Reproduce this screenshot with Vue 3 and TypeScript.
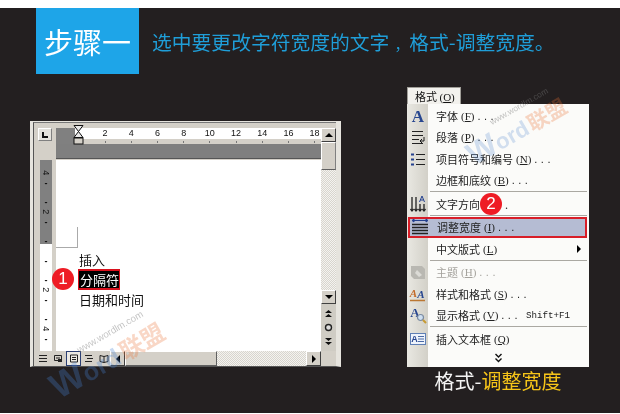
<script setup lang="ts">
interface MenuRow {
  kind: 'item' | 'sep'
  label?: string
  key?: string
  dots?: boolean
  icon?: string
  active?: boolean
  muted?: boolean
  arrow?: boolean
  shortcut?: string
  badge?: string
}

const rows: MenuRow[] = [
  { kind: 'item', label: '字体', key: 'F', dots: true, icon: 'font' },
  { kind: 'item', label: '段落', key: 'P', dots: true, icon: 'para' },
  { kind: 'item', label: '项目符号和编号', key: 'N', dots: true, icon: 'list' },
  { kind: 'item', label: '边框和底纹', key: 'B', dots: true },
  { kind: 'sep' },
  { kind: 'item', label: '文字方向', icon: 'dir', badge: '2' },
  { kind: 'sep' },
  { kind: 'item', label: '调整宽度', key: 'I', dots: true, icon: 'fit', active: true },
  { kind: 'item', label: '中文版式', key: 'L', arrow: true },
  { kind: 'sep' },
  { kind: 'item', label: '主题', key: 'H', dots: true, icon: 'theme', muted: true },
  { kind: 'item', label: '样式和格式', key: 'S', dots: true, icon: 'style' },
  { kind: 'item', label: '显示格式', key: 'V', dots: true, icon: 'reveal', shortcut: 'Shift+F1' },
  { kind: 'sep' },
  { kind: 'item', label: '插入文本框', key: 'Q', icon: 'box' }
]

const rulerNumbers: number[] = [2, 4, 6, 8, 10, 12, 14, 16, 18]
const sideRuler: string[] = ['4', '-', '', '-', '2', '-', '', '-', '', '-', '', '-', '2', '-', '', '-', '4', '-']
</script>

<template>
  <div class="page">
    <div class="dark">
      <header class="head">
        <div class="step">步骤一</div>
        <h1 class="title">选中要更改字符宽度的文字<span class="comma">，</span>格式-调整宽度。</h1>
      </header>

      <main class="main">
        <section class="win">
          <div class="grid">
            <div class="corner"><span class="corner-btn"><i></i></span></div>

            <div class="ruler">
              <div class="ruler-nums">
                <span v-for="n in rulerNumbers" :key="n">{{ n }}</span>
              </div>
              <div class="ruler-ticks">
                <span v-for="n in rulerNumbers" :key="n"><i></i></span>
              </div>
              <div class="ruler-band"></div>
              <svg class="hourglass" width="11" height="20" viewBox="0 0 11 20">
                <path d="M1 .5h9L5.5 6.5zM1 12.5L5.5 6.5 10 12.5z" fill="#e8e8e8" stroke="#111" />
                <rect x="1" y="13" width="9" height="6" fill="#d4d0c8" stroke="#111" />
              </svg>
            </div>

            <div class="vscroll">
              <button class="sbtn"><i class="tri up"></i></button>
              <div class="vthumb"></div>
              <div class="track"></div>
              <button class="sbtn"><i class="tri down"></i></button>
              <div class="browse">
                <svg width="11" height="9" viewBox="0 0 11 9"><path d="M2 4L5.500 1 9 4zM2 8L5.500 5 9 8z" fill="#111" /></svg>
                <svg width="11" height="9" viewBox="0 0 11 9"><circle cx="5.500" cy="4.500" r="3" fill="#ddd" stroke="#222" stroke-width="1.400" /></svg>
                <svg width="11" height="9" viewBox="0 0 11 9"><path d="M2 1h7L5.500 4zM2 5h7L5.500 8z" fill="#111" /></svg>
              </div>
            </div>

            <div class="side">
              <span v-for="(s, i) in sideRuler" :key="i" class="side-slot" :class="{ num: s !== '-' }">{{ s }}</span>
            </div>

            <div class="doc">
              <div class="margin-mark"></div>
              <p class="line">插入</p>
              <p class="line sel"><span>分隔符</span><b class="badge one">1</b></p>
              <p class="line">日期和时间</p>
            </div>

            <div class="hscroll">
              <div class="views">
                <svg width="10" height="9" viewBox="0 0 10 9"><path d="M1 1.500h8M1 4.500h8M1 7.500h8" stroke="#222" /></svg>
                <svg width="10" height="9" viewBox="0 0 10 9"><path d="M1.500 1.500h7v5h-7zM3 4h4" fill="none" stroke="#222" /><rect x="5" y="5" width="4" height="3" fill="#222" /></svg>
                <span class="view-on"><svg width="10" height="9" viewBox="0 0 10 9"><path d="M1.500 1h7v7h-7zM3 3.500h4M3 5.500h4" fill="none" stroke="#222" /></svg></span>
                <svg width="10" height="9" viewBox="0 0 10 9"><path d="M1 1.500h7M3 4.500h6M1 7.500h7" stroke="#222" /></svg>
                <svg width="10" height="9" viewBox="0 0 10 9"><path d="M1 1.500l4 1 4-1v6l-4 1-4-1zM5 2.500v6" fill="none" stroke="#222" /></svg>
              </div>
              <button class="sbtn small"><i class="tri left"></i></button>
              <div class="hthumb"></div>
              <div class="track"></div>
              <button class="sbtn small"><i class="tri right"></i></button>
            </div>
            <div class="grip"></div>
          </div>
        </section>

        <section class="format">
          <div class="tab">格式 <span class="key">(<u>O</u>)</span></div>
          <ul class="menu">
            <template v-for="(r, i) in rows" :key="i">
              <li v-if="r.kind === 'sep'" class="sep"></li>
              <li v-else class="row" :class="{ active: r.active, muted: r.muted }">
                <span class="ico">
                  <svg v-if="r.icon" width="18" height="18" viewBox="0 0 18 18">
                    <text v-if="r.icon === 'font'" x="9" y="15" text-anchor="middle" class="ico-a">A</text>
                    <g v-else-if="r.icon === 'para'" fill="none" stroke="#222">
                      <path d="M3 3.500h11M3 7.500h11M3 11.500h7M3 15.500h11" />
                      <path d="M15 9v4h-4m2-2l-2 2 2 2" stroke="#1a1a1a" />
                    </g>
                    <g v-else-if="r.icon === 'list'" stroke="#222">
                      <path d="M7 4.500h9M7 9.500h9M7 14.500h9" />
                      <path d="M2 3.500h3v2H2zM2 8.500h3v2H2zM2 13.500h3v2H2z" fill="#24418f" stroke="none" />
                    </g>
                    <g v-else-if="r.icon === 'dir'" fill="none" stroke="#222" stroke-width="1.300">
                      <path d="M3 2v14M7 2v14M11 9v7M15 9v7" />
                      <path d="M1.500 14l1.500 2 1.500-2M5.500 14L7 16l1.500-2M9.500 14l1.500 2 1.500-2M13.500 14l1.500 2 1.500-2" />
                      <path d="M10.500 7L13 1l2.500 6M11.500 5h3" stroke="#24418f" stroke-width="1" />
                    </g>
                    <g v-else-if="r.icon === 'fit'" stroke="#222">
                      <path d="M1 2.500l2-1.500v3zM17 2.500l-2-1.500v3zM3 2.500h12" stroke="#24418f" fill="#24418f" />
                      <path d="M1 6.500h16M1 9.500h16M1 12.500h16M1 15.500h16" stroke-width="1.300" />
                    </g>
                    <g v-else-if="r.icon === 'theme'">
                      <path d="M2 3h11l3 3v10H5l-3-3z" fill="#b9b8b2" />
                      <path d="M8 7l5 5-3 2-4-4z" fill="#dcdbd6" />
                    </g>
                    <g v-else-if="r.icon === 'style'">
                      <text x="4.500" y="12" text-anchor="middle" class="ico-s">A</text>
                      <text x="12" y="13" text-anchor="middle" class="ico-s second">A</text>
                      <path d="M1 15.500h15" stroke="#b73" stroke-width="1.500" />
                    </g>
                    <g v-else-if="r.icon === 'reveal'">
                      <text x="6" y="11" text-anchor="middle" class="ico-r">A</text>
                      <circle cx="11.500" cy="11.500" r="3" fill="#cfe0f2" stroke="#7a8aa0" stroke-width="1.200" />
                      <path d="M14 14l3 3" stroke="#c79a33" stroke-width="2" />
                    </g>
                    <g v-else-if="r.icon === 'box'">
                      <rect x="1.500" y="3.500" width="15" height="11" fill="#eef3fb" stroke="#5f7fb5" />
                      <text x="5.500" y="12" text-anchor="middle" class="ico-b">A</text>
                      <path d="M9 6.500h6M9 9h6M9 11.500h6" stroke="#4a6aa5" />
                    </g>
                  </svg>
                </span>
                <span class="label">{{ r.label }}</span>
                <span v-if="r.key" class="key">(<u>{{ r.key }}</u>)</span>
                <span v-if="r.dots" class="dots">...</span>
                <b v-if="r.badge" class="badge two">{{ r.badge }}</b>
                <span v-if="r.badge" class="tail">.</span>
                <span v-if="r.shortcut" class="shortcut">{{ r.shortcut }}</span>
                <i v-if="r.arrow" class="tri right sub"></i>
              </li>
            </template>
            <li class="more">
              <svg width="9" height="10" viewBox="0 0 9 10"><path d="M1.500 1L4.500 4l3-3M1.500 5.500l3 3 3-3" fill="none" stroke="#111" stroke-width="1.400" /></svg>
            </li>
          </ul>
          <p class="caption">格式-<em>调整宽度</em></p>
        </section>
      </main>

      <div class="mark mark-a" aria-hidden="true">
        <span class="www">www.wordlm.com</span>
        <span class="w">W</span><span class="ord">ord</span><span class="lm">联盟</span>
      </div>
      <div class="mark mark-b" aria-hidden="true">
        <span class="www">www.wordlm.com</span>
        <span class="w">W</span><span class="ord">ord</span><span class="lm">联盟</span>
      </div>
    </div>
  </div>
</template>

<style>
html,
body {
  margin: 0;
  background: #fff;
}
</style>

<style scoped>
* {
  box-sizing: border-box;
}
.page {
  width: 620px;
  height: 414px;
  overflow: hidden;
  background: #fff;
  padding-top: 9px;
  font-family: "Noto Sans CJK SC", "Liberation Sans", sans-serif;
}
.dark {
  position: relative;
  height: 405px;
  background: #231f20;
  filter: blur(0.3px);
}
.head {
  display: flex;
  align-items: center;
  padding-left: 36px;
  margin-top: -1px;
  height: 66px;
}
.step {
  width: 103px;
  height: 66px;
  display: flex;
  align-items: center;
  justify-content: center;
  background: #1ea5e8;
  color: #fff;
  font-size: 29px;
  line-height: 1;
}
.title {
  margin: 1px 0 0 13px;
  font-size: 19.800px;
  font-weight: 400;
  line-height: 1;
  color: #1f9ed8;
  white-space: nowrap;
}
.comma {
  padding-left: 5px;
  font-size: 14.800px;
}
.main {
  display: flex;
  align-items: flex-start;
  padding-left: 30px;
  margin-top: 13px;
}

/* Word window */
.win {
  width: 311px;
  height: 246px;
  margin-top: 34px;
  background: #d4d0c8;
  border: 1px solid #e6e4de;
  border-width: 1px 5px 1px 3px;
  border-bottom-color: #555;
}
.grid {
  display: grid;
  grid-template-columns: 22px 265px 15px;
  grid-template-rows: 32px 191px 16px;
  padding-top: 5px;
  border-left: 1px solid #555;
  border-top: 1px solid #777;
  height: 244px;
}
.corner {
  padding: 0 0 0 4px;
}
.corner-btn {
  display: flex;
  width: 14px;
  height: 13px;
  align-items: center;
  justify-content: center;
  background: #e4e2dc;
  border: 1px solid;
  border-color: #fff #808080 #808080 #fff;
}
.corner-btn i {
  display: block;
  width: 6px;
  height: 6px;
  border-left: 2px solid #111;
  border-bottom: 2px solid #111;
}
.ruler {
  position: relative;
  background: linear-gradient(#808080, #808080) 0 0 / 19px 16px no-repeat, #d4d0c8;
}
.ruler-nums {
  display: flex;
  height: 11px;
  padding-left: 36px;
  background: linear-gradient(90deg, transparent 19px, #fff 19px);
  font: 9px/11px "Liberation Sans", sans-serif;
  color: #111;
}
.ruler-nums span {
  flex: 0 0 26.200px;
  text-align: center;
}
.ruler-ticks {
  display: flex;
  height: 5px;
  padding-left: 36px;
}
.ruler-ticks span {
  flex: 0 0 26.200px;
  display: flex;
  justify-content: center;
  align-items: center;
}
.ruler-ticks i {
  display: block;
  width: 1px;
  height: 2px;
  background: #777;
}
.ruler-band {
  height: 15px;
  background: #7f7f7f;
  border-bottom: 1px solid #555;
}
.hourglass {
  position: absolute;
  left: 17px;
  top: -3px;
}
.vscroll {
  grid-column: 3;
  grid-row: 1 / 3;
  display: flex;
  flex-direction: column;
}
.sbtn {
  flex: none;
  display: flex;
  align-items: center;
  justify-content: center;
  width: 15px;
  height: 14px;
  padding: 0;
  background: #d4d0c8;
  border: 1px solid;
  border-color: #fff #404040 #404040 #fff;
}
.sbtn.small {
  height: 15px;
}
.tri {
  display: block;
  width: 0;
  height: 0;
  border: 4px solid transparent;
}
.tri.up {
  border-top-width: 0;
  border-bottom-color: #000;
  border-bottom-width: 4px;
}
.tri.down {
  border-bottom-width: 0;
  border-top-color: #000;
}
.tri.left {
  border-left-width: 0;
  border-right-color: #000;
}
.tri.right {
  border-right-width: 0;
  border-left-color: #000;
}
.vthumb {
  flex: none;
  height: 28px;
  background: #d4d0c8;
  border: 1px solid;
  border-color: #fff #808080 #606060 #fff;
}
.track {
  flex: 1;
  background: repeating-conic-gradient(#f4f3f0 0 25%, #d8d5ce 0 50%) 0 0 / 2px 2px;
}
.browse {
  flex: none;
  height: 47px;
  display: flex;
  flex-direction: column;
  align-items: center;
  justify-content: space-around;
  padding: 3px 0;
  background: #cfccc4;
}
.side {
  display: flex;
  flex-direction: column;
  width: 12px;
  height: 191px;
  margin-left: 6px;
  padding-top: 8px;
  background: linear-gradient(#808080 84px, #fff 84px);
}
.side-slot {
  flex: 0 0 9.750px;
  display: flex;
  align-items: center;
  justify-content: center;
  font: 9px/10px "Liberation Sans", sans-serif;
  color: #111;
  overflow: hidden;
}
.side-slot.num {
  transform: rotate(90deg);
}
.side-slot:not(.num) {
  font-weight: 700;
}
.doc {
  position: relative;
  background: #fff;
  padding: 90px 0 0 23px;
}
.margin-mark {
  position: absolute;
  left: 0;
  top: 67px;
  width: 22px;
  height: 21px;
  border-right: 1px solid #aaa;
  border-bottom: 1px solid #aaa;
}
.line {
  position: relative;
  margin: 0;
  height: 19px;
  font-size: 13px;
  line-height: 19px;
  color: #111;
  white-space: nowrap;
}
.line.sel {
  height: 21px;
  line-height: 17px;
}
.line.sel span {
  display: inline-block;
  margin-left: -1px;
  width: 42px;
  height: 21px;
  padding-left: 1px;
  background: #000;
  border: 2px solid #d8101c;
  border-width: 2px 1px;
  color: #fff;
}
.badge {
  display: flex;
  align-items: center;
  justify-content: center;
  width: 22px;
  height: 22px;
  border-radius: 50%;
  background: #ee1c25;
  color: #fff;
  font: 400 17px/22px "Liberation Sans", sans-serif;
}
.badge.one {
  position: absolute;
  left: -27px;
  top: -1px;
}
.hscroll {
  grid-column: 1 / 3;
  display: flex;
  align-items: flex-start;
}
.views {
  display: flex;
  align-items: center;
  gap: 5px;
  width: 76px;
  height: 15px;
  padding-left: 4px;
  flex: none;
}
.view-on {
  display: flex;
  align-items: center;
  justify-content: center;
  width: 15px;
  height: 15px;
  margin: 0 -2px;
  background: #eceae4;
  border: 1px solid #2b3f73;
}
.hthumb {
  flex: none;
  width: 92px;
  height: 15px;
  background: #d4d0c8;
  border: 1px solid;
  border-color: #fff #606060 #606060 #fff;
}
.hscroll .track {
  height: 15px;
}

/* Format menu */
.format {
  width: 182px;
  margin-left: 66px;
}
.tab {
  width: 54px;
  height: 17px;
  padding-left: 7px;
  background: #f2f1ed;
  border: 1px solid #a09e98;
  border-bottom: 0;
  font-size: 11px;
  line-height: 16px;
  color: #111;
  white-space: nowrap;
}
.menu {
  list-style: none;
  margin: 0;
  height: 263px;
  padding: 1px 0 0;
  background: linear-gradient(90deg, #e9e8e2 0, #d2d0c8 21px, #fbfbf9 21px);
  color: #222;
}
.row {
  position: relative;
  display: flex;
  align-items: center;
  height: 21.500px;
  font-size: 11px;
  white-space: nowrap;
}
.row.active {
  margin: 0 2px 0 1px;
  background: #b5bcd3;
  border: 2px solid #d81e28;
}
.row.active .ico {
  margin-left: -1px;
  width: 28px;
}
.row.muted {
  color: #a5a39d;
}
.ico {
  flex: none;
  display: flex;
  justify-content: flex-start;
  padding-left: 2px;
  width: 29px;
}
.ico svg {
  display: block;
}
.ico-a {
  font: 700 17px "Liberation Serif", serif;
  fill: #27468f;
}
.ico-s {
  font: italic 700 11px "Liberation Serif", serif;
  fill: #c36a2a;
}
.ico-s.second {
  fill: #27468f;
}
.ico-r {
  font: 700 13px "Liberation Serif", serif;
  fill: #27468f;
}
.ico-b {
  font: 700 9px "Liberation Sans", sans-serif;
  fill: #27468f;
}
.key {
  margin-left: 3px;
  font-family: "Liberation Serif", serif;
  font-size: 11px;
}
.tab .key {
  margin-left: 0;
}
.dots {
  margin-left: 3px;
  letter-spacing: 3.500px;
  font-family: "Liberation Sans", sans-serif;
  font-size: 11px;
}
.tail {
  margin-left: 3px;
}
.shortcut {
  position: absolute;
  left: 119px;
  font: 9.200px "Liberation Mono", monospace;
}
.sub {
  position: absolute;
  right: 8px;
}
.sep {
  height: 2px;
  margin-left: 23px;
  margin-right: 2px;
  border-top: 1px solid #aaa8a2;
}
.more {
  display: flex;
  height: 17.500px;
  align-items: center;
  justify-content: center;
}
.caption {
  margin: 2px 0 0;
  height: 24px;
  font-size: 20px;
  line-height: 24px;
  text-align: center;
  color: #f4f4f4;
}
.caption em {
  font-style: normal;
  color: #f6c519;
}

/* Watermarks */
.mark {
  position: absolute;
  display: flex;
  align-items: baseline;
  white-space: nowrap;
  pointer-events: none;
  font-family: "Liberation Sans", sans-serif;
  font-weight: 700;
  transform-origin: 0 100%;
}
.www {
  position: absolute;
  left: 34px;
  top: -5px;
  font-size: 8px;
  font-weight: 400;
  color: rgba(120, 120, 120, 0.45);
}
.w {
  font-size: 30px;
  color: rgba(60, 120, 200, 0.22);
}
.ord {
  font-size: 21px;
  color: rgba(60, 120, 200, 0.22);
}
.lm {
  margin-left: 2px;
  font-size: 20px;
  font-family: "Noto Sans CJK SC", sans-serif;
  color: rgba(235, 110, 50, 0.28);
}
.mark-a {
  left: 478px;
  top: 130px;
  transform: rotate(-30deg) scale(1.05);
}
.mark-b {
  left: 63px;
  top: 365px;
  transform: rotate(-30deg) scale(1.2);
}
.mark-b .w,
.mark-b .ord {
  color: rgba(70, 130, 210, 0.3);
}
</style>
